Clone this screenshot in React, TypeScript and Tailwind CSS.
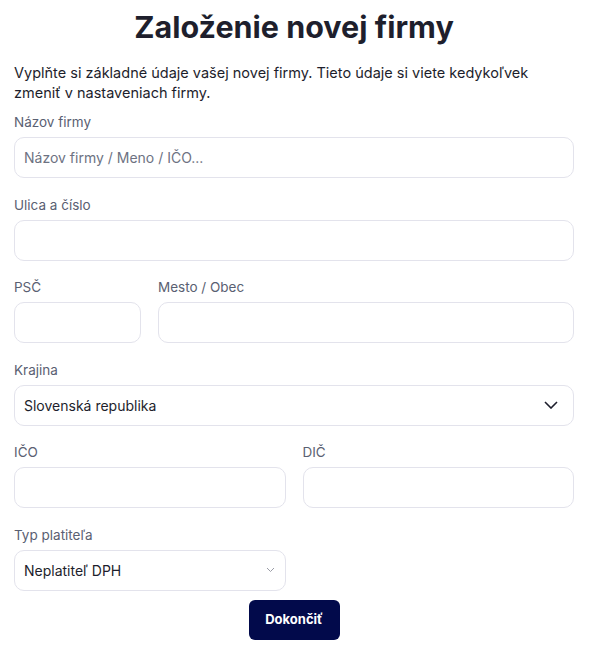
import React from "react";

const font = { fontFamily: "Inter, 'Noto Sans', sans-serif" };

const Label = ({ children }: { children: React.ReactNode }) => (
  <label className="mb-[5px] block text-[13.5px] leading-[20px] text-[#5a6072]">{children}</label>
);

const TextInput = ({ placeholder }: { placeholder?: string }) => (
  <input
    placeholder={placeholder}
    className="h-[41px] w-full rounded-[10px] border border-[#e3e3ec] bg-white px-[9px] text-[14px] text-[#1d1e2c] outline-none placeholder:text-[#6d7282]"
  />
);

const Chevron = ({ small }: { small?: boolean }) =>
  small ? (
    <svg width="9" height="6" viewBox="0 0 9 6" fill="none">
      <path d="M1 1l3.5 3.5L8 1" stroke="#9a9ca6" strokeWidth="1" />
    </svg>
  ) : (
    <svg width="14" height="8" viewBox="0 0 14 8" fill="none">
      <path d="M1 1l6 6 6-6" stroke="#1d1e2c" strokeWidth="1.6" />
    </svg>
  );

const SelectBox = ({ value, small }: { value: string; small?: boolean }) => (
  <div
    className={`flex h-[41px] w-full items-center justify-between rounded-[10px] border border-[#e3e3ec] bg-white pl-[9px] text-[14px] text-[#1d1e2c] ${
      small ? "pr-[10px]" : "pr-[15px]"
    }`}
  >
    <span>{value}</span>
    <Chevron small={small} />
  </div>
);

const App = () => {
  return (
    <div className="min-h-screen w-full bg-white pl-[14px] pr-[17px] pt-[7px]" style={font}>
      <h1 className="text-center text-[30.5px] font-bold leading-[40px] text-[#1e1f2d]">Založenie novej firmy</h1>
      <p className="mt-[16px] text-[14.5px] leading-[20px] text-[#1d1e2c]">
        Vyplňte si základné údaje vašej novej firmy. Tieto údaje si viete kedykoľvek zmeniť v nastaveniach firmy.
      </p>

      <div className="mt-[9px] flex flex-col gap-[16.5px]">
        <div>
          <Label>Názov firmy</Label>
          <TextInput placeholder="Názov firmy / Meno / IČO..." />
        </div>
        <div>
          <Label>Ulica a číslo</Label>
          <TextInput />
        </div>
        <div className="flex gap-[17px]">
          <div className="w-[127px]">
            <Label>PSČ</Label>
            <TextInput />
          </div>
          <div className="flex-1">
            <Label>Mesto / Obec</Label>
            <TextInput />
          </div>
        </div>
        <div>
          <Label>Krajina</Label>
          <SelectBox value="Slovenská republika" />
        </div>
        <div className="grid grid-cols-2 gap-[17px]">
          <div>
            <Label>IČO</Label>
            <TextInput />
          </div>
          <div>
            <Label>DIČ</Label>
            <TextInput />
          </div>
        </div>
        <div className="grid grid-cols-2 gap-[17px]">
          <div>
            <Label>Typ platiteľa</Label>
            <SelectBox value="Neplatiteľ DPH" small />
          </div>
        </div>
      </div>

      <div className="mt-[9px] flex justify-center">
        <button className="h-[40px] w-[91px] rounded-[6px] bg-[#020a4b] text-[13px] font-bold text-white">
          Dokončiť
        </button>
      </div>
    </div>
  );
};

export default App;
